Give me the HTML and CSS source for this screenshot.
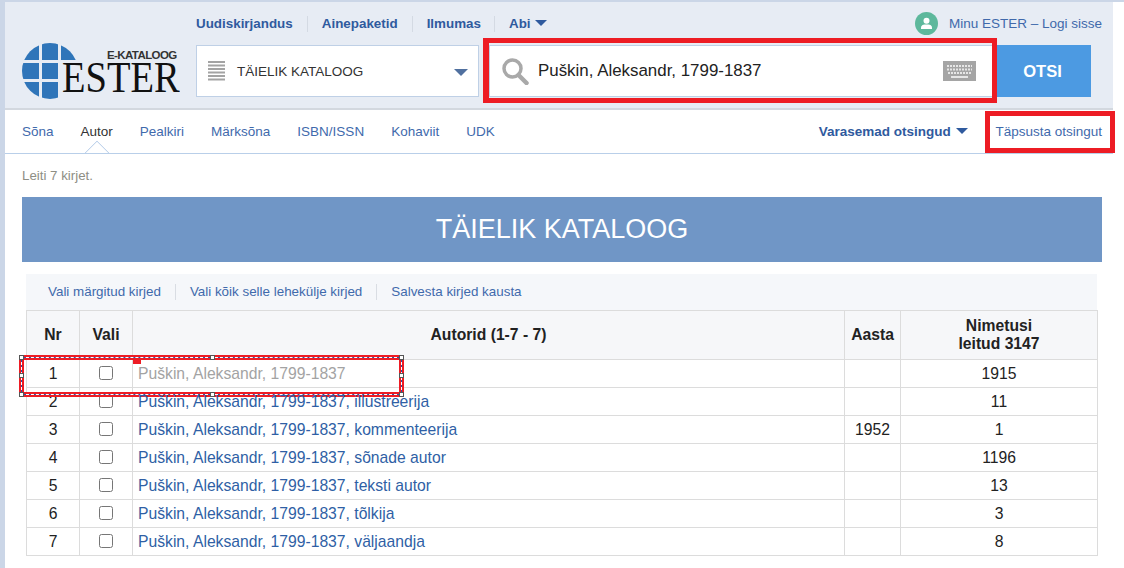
FILE: index.html
```html
<!DOCTYPE html>
<html lang="et">
<head>
<meta charset="utf-8">
<title>ESTER</title>
<link rel="stylesheet" href="styles.css">
</head>
<body>
<header class="head">
  <div class="topbar">
    <nav class="toplinks">
      <a>Uudiskirjandus</a><a>Ainepaketid</a><a>Ilmumas</a><a>Abi <span class="caret"></span></a>
    </nav>
    <div class="account">
      <svg class="avatar" viewBox="0 0 23 23"><circle cx="11.5" cy="11.5" r="11.5" fill="#5db89c"/><circle cx="11.5" cy="8.8" r="3" fill="#fff"/><path d="M6 17v-1.500c0-2 2-3 3.500-3h4c1.500 0 3.500 1 3.500 3V17z" fill="#fff"/></svg>
      <a>Minu ESTER – Logi sisse</a>
    </div>
  </div>
  <div class="searchbar">
    <div class="logo">
      <svg class="globe" viewBox="0 0 56 56"><defs><clipPath id="c"><circle cx="28" cy="28" r="28"/></clipPath></defs><g clip-path="url(#c)" fill="#2f75b9"><rect x="0" y="0" width="17" height="17"/><rect x="20" y="0" width="16" height="17"/><rect x="39" y="0" width="17" height="17"/><rect x="0" y="20" width="17" height="16"/><rect x="20" y="20" width="16" height="16"/><rect x="0" y="39" width="17" height="17"/><rect x="20" y="39" width="16" height="17"/></g></svg>
      <span class="logo-sub">E-KATALOOG</span>
      <span class="logo-main">ESTER</span>
    </div>
    <div class="select">
      <svg class="lines" viewBox="0 0 17 20"><path d="M0 1h17M0 4.500h17M0 8h17M0 11.500h17M0 15h17M0 18.500h17" stroke="#a3a3a3" stroke-width="2"/></svg>
      <span class="select-label">TÄIELIK KATALOOG</span>
      <span class="select-caret"></span>
    </div>
    <div class="query">
      <svg class="glass" viewBox="0 0 27 27"><circle cx="10.500" cy="10.500" r="8.500" fill="none" stroke="#a9a9a9" stroke-width="3.500"/><path d="M16.500 17l8 8" stroke="#a9a9a9" stroke-width="4.500" stroke-linecap="round"/></svg>
      <span class="query-text">Puškin, Aleksandr, 1799-1837</span>
      <svg class="kbd" viewBox="0 0 33 20"><rect width="33" height="20" fill="#a5a5a5"/><path d="M4 5h25M4 8.500h25M5 12h23" stroke="#e6e6e6" stroke-width="2" stroke-dasharray="2 1"/><path d="M8 16h17" stroke="#e6e6e6" stroke-width="2"/></svg>
    </div>
    <button class="go">OTSI</button>
  </div>
</header>
<nav class="tabs">
  <a class="tab">Sõna</a>
  <a class="tab active">Autor</a>
  <a class="tab">Pealkiri</a>
  <a class="tab">Märksõna</a>
  <a class="tab">ISBN/ISSN</a>
  <a class="tab">Kohaviit</a>
  <a class="tab">UDK</a>
  <a class="history">Varasemad otsingud <span class="caret"></span></a>
  <a class="refine">Täpsusta otsingut</a>
</nav>
<main class="main">
  <p class="found">Leiti 7 kirjet.</p>
  <h1 class="banner">TÄIELIK KATALOOG</h1>
  <section class="results">
    <div class="actions"><a>Vali märgitud kirjed</a><a>Vali kõik selle lehekülje kirjed</a><a>Salvesta kirjed kausta</a></div>
    <table class="grid">
      <colgroup><col class="c1"><col class="c2"><col class="c3"><col class="c4"><col class="c5"></colgroup>
      <thead><tr><th>Nr</th><th>Vali</th><th>Autorid (1-7 - 7)</th><th>Aasta</th><th>Nimetusi<br>leitud 3147</th></tr></thead>
      <tbody>
        <tr class="sel"><td>1</td><td><input type="checkbox"></td><td class="name"><a class="seen">Puškin, Aleksandr, 1799-1837</a>
          <div class="marker"><i class="tab-red"></i><i class="h tl"></i><i class="h tc"></i><i class="h tr"></i><i class="h ml"></i><i class="h mr"></i><i class="h bl"></i><i class="h bc"></i><i class="h br"></i></div></td><td></td><td>1915</td></tr>
        <tr><td>2</td><td><input type="checkbox"></td><td class="name"><a>Puškin, Aleksandr, 1799-1837, illustreerija</a></td><td></td><td>11</td></tr>
        <tr><td>3</td><td><input type="checkbox"></td><td class="name"><a>Puškin, Aleksandr, 1799-1837, kommenteerija</a></td><td>1952</td><td>1</td></tr>
        <tr><td>4</td><td><input type="checkbox"></td><td class="name"><a>Puškin, Aleksandr, 1799-1837, sõnade autor</a></td><td></td><td>1196</td></tr>
        <tr><td>5</td><td><input type="checkbox"></td><td class="name"><a>Puškin, Aleksandr, 1799-1837, teksti autor</a></td><td></td><td>13</td></tr>
        <tr><td>6</td><td><input type="checkbox"></td><td class="name"><a>Puškin, Aleksandr, 1799-1837, tõlkija</a></td><td></td><td>3</td></tr>
        <tr><td>7</td><td><input type="checkbox"></td><td class="name"><a>Puškin, Aleksandr, 1799-1837, väljaandja</a></td><td></td><td>8</td></tr>
      </tbody>
    </table>
  </section>
</main>
<div class="box box-search"></div>
<div class="box box-refine"></div>
</body>
</html>
```
FILE: styles.css
```css
* { box-sizing: border-box; }
html, body { height: 100%; }
body {
  margin: 0;
  height: 568px;
  overflow: hidden;
  position: relative;
  border-top: 2px solid #cbd6e7;
  border-left: 5px solid #cbd6e7;
  font-family: "Liberation Sans", Arial, sans-serif;
  color: #222;
  background: #fff;
}
.head {
  width: 1108px;
  height: 108px;
  background: #e7ecf4;
  border-bottom: 2px solid #d3d8df;
}
.topbar {
  display: flex;
  justify-content: space-between;
  align-items: center;
  height: 43px;
  padding: 10px 11px 10px 177px;
}
.toplinks { display: flex; }
.toplinks a {
  font-size: 13.400px;
  font-weight: bold;
  color: #2f5a9e;
  padding: 0 14px;
  line-height: 16px;
  border-left: 1px solid #d4dae3;
}
.toplinks a:first-child { border-left: 0; padding-left: 14px; }
.toplinks a:nth-child(3) { padding-right: 13px; }
.caret {
  display: inline-block;
  border: 6px solid transparent;
  border-top: 6px solid #2f5a9e;
  border-bottom: 0;
  margin-left: 1px;
  vertical-align: 2px;
}
.account { display: flex; align-items: center; gap: 11px; font-size: 13.500px; color: #4069ab; }
.avatar { width: 23px; height: 23px; display: block; }
.searchbar { display: flex; align-items: flex-start; padding-left: 17px; }
.logo { position: relative; width: 158px; height: 56px; margin-top: -2px; margin-right: 16px; }
.globe { width: 56px; height: 56px; display: block; }
.logo-main {
  position: absolute;
  left: 40px;
  top: 19px;
  font-family: "Liberation Serif", serif;
  font-size: 45px;
  line-height: 30px;
  color: #111;
  transform: scaleX(0.855);
  transform-origin: left center;
}
.logo-sub {
  position: absolute;
  left: 85px;
  top: 6px;
  font-size: 11.500px;
  font-weight: bold;
  line-height: 13px;
  color: #333;
  letter-spacing: -0.600px;
}
.select {
  width: 283px;
  height: 52px;
  background: #fff;
  border: 1px solid #bfd0e6;
  display: flex;
  align-items: center;
  padding: 0 10px 0 11px;
}
.lines { width: 17px; height: 20px; }
.select-label { font-size: 13.500px; color: #333; margin-left: 12px; flex: 1; }
.select-caret { border: 7px solid transparent; border-top: 7px solid #50709f; border-bottom: 0; margin-top: 3px; }
.query {
  width: 508px;
  height: 52px;
  margin-left: 10px;
  background: #fff;
  border: 1px solid #bfd0e6;
  display: flex;
  align-items: center;
  padding: 0 20px 0 12px;
}
.glass { width: 27px; height: 27px; }
.query-text { font-size: 16.900px; color: #222; margin-left: 9px; flex: 1; }
.kbd { width: 33px; height: 20px; }
.go {
  width: 94px;
  height: 52px;
  border: 0;
  padding: 0 3px 0 0;
  background: #4c9ae2;
  color: #fff;
  font: bold 16.500px "Liberation Sans", Arial, sans-serif;
}
.tabs {
  width: 1108px;
  height: 44px;
  display: flex;
  align-items: center;
  padding: 0 11px 0 17px;
  border-bottom: 1px solid #b9cfe9;
  font-size: 13.500px;
}
.tab { color: #3f6aac; margin-right: 27px; position: relative; }
.tab.active { color: #333; }
.tab.active::after {
  content: "";
  position: absolute;
  left: 50%;
  bottom: -23px;
  width: 17px;
  height: 17px;
  margin-left: -8.500px;
  background: #fff;
  border-left: 1px solid #b9cfe9;
  border-top: 1px solid #b9cfe9;
  transform: rotate(45deg);
  clip-path: polygon(0 0, 100% 0, 0 100%);
}
.history { margin-left: auto; font-weight: bold; font-size: 13.500px; color: #2f5a9e; }
.history .caret { margin-left: 2px; }
.refine { margin-left: 27px; color: #3f6aac; }
.main { padding: 0 0 0 17px; width: 1097px; }
.found { margin: 0; height: 43px; padding-top: 15px; font-size: 13.300px; line-height: 14px; color: #8e8e84; }
.banner {
  margin: 0;
  height: 65px;
  background: #7096c6;
  color: #fff;
  font-size: 27px;
  font-weight: normal;
  line-height: 65px;
  text-align: center;
}
.results { padding: 12px 5px 0 4px; }
.actions {
  display: flex;
  align-items: center;
  height: 36px;
  background: #f5f7fa;
  padding-left: 8px;
  font-size: 13.400px;
  color: #3f6aac;
}
.actions a { padding: 0 14px; line-height: 16px; border-left: 1px solid #d9dde3; }
.actions a:first-child { border-left: 0; }
.grid { border-collapse: collapse; width: 1072px; table-layout: fixed; font-size: 15.700px; }
.c1, .c2 { width: 53px; }
.c4 { width: 56px; }
.c5 { width: 197px; }
.grid th, .grid td { border: 1px solid #dcdcdc; text-align: center; padding: 0 5px; }
.grid th { height: 49px; background: #f6f7f9; font-size: 15.700px; line-height: 18px; color: #222; }
.grid td { height: 28px; line-height: 20px; }
.grid td.name { text-align: left; position: relative; }
.name a { color: #2f5fa5; }
.name a.seen { color: #a3a3a3; }
.grid input { width: 14px; height: 14px; margin: 0; display: inline-block; vertical-align: -1px; }
.marker {
  position: absolute;
  left: -114px;
  top: -5px;
  width: 385px;
  height: 42px;
  border: 5px solid #ed1c24;
}
.marker::before, .marker::after {
  content: "";
  position: absolute;
  inset: -3px;
}
.marker::before { border: 1px solid #2b55a8; }
.marker::after { border: 1px dashed #fff; }
.tab-red { position: absolute; left: 109px; top: -1px; width: 8px; height: 5px; background: #ed1c24; }
.h { position: absolute; z-index: 1; width: 5px; height: 5px; background: #fff; border: 1px solid #555; }
.tl { left: -5px; top: -5px; }
.tc { left: 186px; top: -5px; }
.tr { right: -5px; top: -5px; }
.ml { left: -5px; top: 13px; }
.mr { right: -5px; top: 13px; }
.bl { left: -5px; bottom: -5px; }
.bc { left: 186px; bottom: -5px; }
.br { right: -5px; bottom: -5px; }
.box { position: absolute; border: 5px solid #ed1c24; pointer-events: none; }
.box-search { left: 478px; top: 36px; width: 514px; height: 65px; border-left-width: 6px; }
.box-refine { left: 980px; top: 109px; width: 130px; height: 42px; }
```
